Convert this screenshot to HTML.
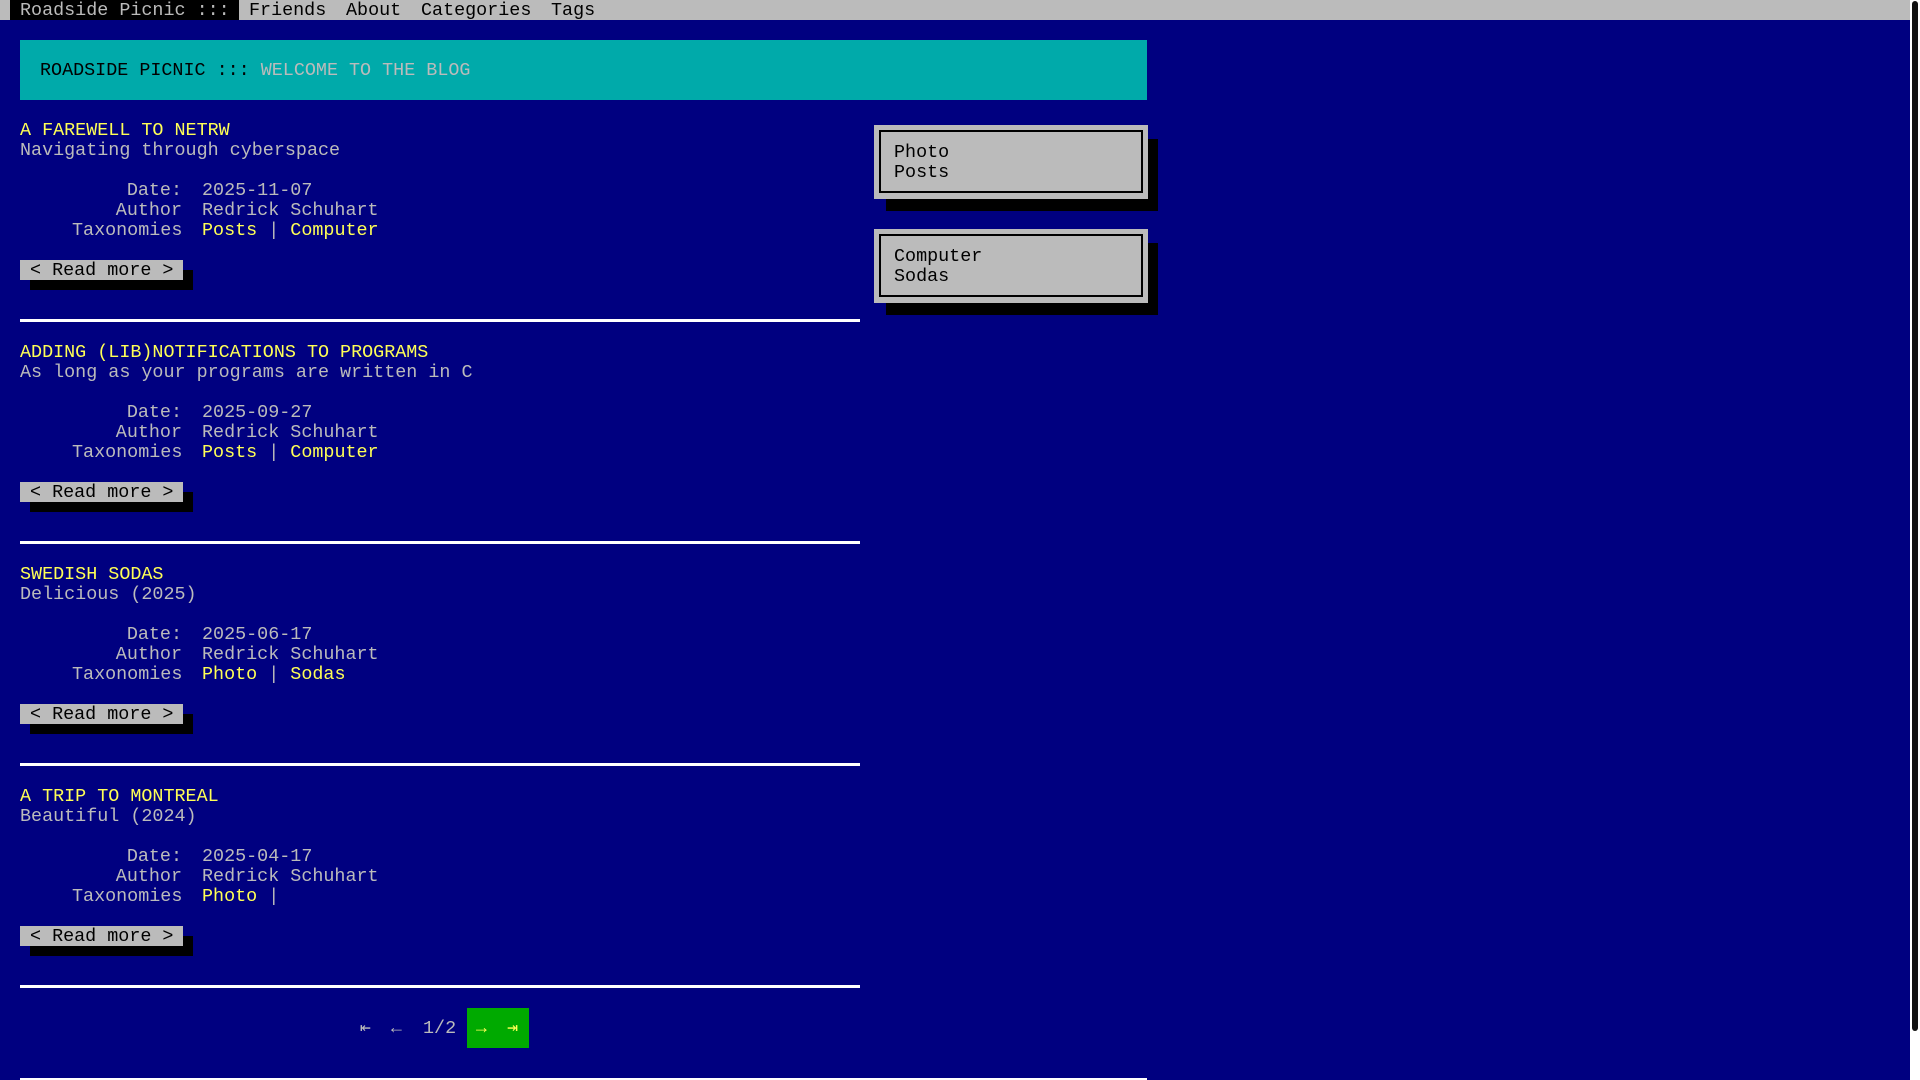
<!DOCTYPE html>
<html><head><meta charset="utf-8"><style>
*{margin:0;padding:0;box-sizing:border-box}
html,body{width:1920px;height:1080px;overflow:hidden;background:#000080;font-family:"Liberation Mono",monospace;font-size:18.4px;color:#bbbbbb}
.a{position:absolute;white-space:pre;line-height:20px}
.nav{position:absolute;left:0;top:0;width:1910px;height:20px;background:#bbbbbb}
.nav span{position:absolute;top:0;line-height:22px;height:20px;color:#000;white-space:pre}
.hero{position:absolute;left:20px;top:40px;width:1127px;height:60px;background:#00aaaa}
.y{color:#ffff55}
.sep{position:absolute;left:20px;width:840px;height:3px;background:#fff}
.btn{position:absolute;left:20px;width:163px;height:20px;background:#bbbbbb;color:#000;line-height:21px;padding-left:10px;white-space:pre}
.sh{position:absolute;left:30px;width:163px;height:20px;background:#000}
.box{position:absolute;left:874px;width:274px;height:74px;background:#bbbbbb}
.box i{position:absolute;left:5px;top:5px;right:5px;bottom:6px;border:2px solid #000}
.box div{position:absolute;left:20px;top:18px;color:#000;line-height:20px;white-space:pre}
.bsh{position:absolute;left:886px;width:272px;height:72px;background:#000}
</style></head><body>
<div class="nav">
<span style="left:10px;width:229px;background:#000;color:#bbbbbb;padding-left:10px">Roadside Picnic :::</span>
<span style="left:249px">Friends</span>
<span style="left:346px">About</span>
<span style="left:421px">Categories</span>
<span style="left:551px">Tags</span>
</div>
<div class="hero"><div class="a" style="left:20px;top:21px;color:#000">ROADSIDE PICNIC ::: <span style="color:#bbbbbb">WELCOME TO THE BLOG</span></div></div>

<div class="bsh" style="top:139px"></div>
<div class="box" style="top:125px"><i></i><div>Photo
Posts</div></div>
<div class="bsh" style="top:243px"></div>
<div class="box" style="top:229px"><i></i><div>Computer
Sodas</div></div>

<!-- post 1 -->
<div class="a y" style="left:20px;top:121px">A FAREWELL TO NETRW</div>
<div class="a" style="left:20px;top:141px">Navigating through cyberspace</div>
<div class="a" style="left:72px;top:181px;width:110px;text-align:right">Date:
Author
Taxonomies</div>
<div class="a" style="left:202px;top:181px">2025-11-07
Redrick Schuhart
<span class="y">Posts</span> | <span class="y">Computer</span></div>
<div class="sh" style="top:270px"></div><div class="btn" style="top:260px">&lt; Read more &gt;</div>
<div class="sep" style="top:319px"></div>

<!-- post 2 -->
<div class="a y" style="left:20px;top:343px">ADDING (LIB)NOTIFICATIONS TO PROGRAMS</div>
<div class="a" style="left:20px;top:363px">As long as your programs are written in C</div>
<div class="a" style="left:72px;top:403px;width:110px;text-align:right">Date:
Author
Taxonomies</div>
<div class="a" style="left:202px;top:403px">2025-09-27
Redrick Schuhart
<span class="y">Posts</span> | <span class="y">Computer</span></div>
<div class="sh" style="top:492px"></div><div class="btn" style="top:482px">&lt; Read more &gt;</div>
<div class="sep" style="top:541px"></div>

<!-- post 3 -->
<div class="a y" style="left:20px;top:565px">SWEDISH SODAS</div>
<div class="a" style="left:20px;top:585px">Delicious (2025)</div>
<div class="a" style="left:72px;top:625px;width:110px;text-align:right">Date:
Author
Taxonomies</div>
<div class="a" style="left:202px;top:625px">2025-06-17
Redrick Schuhart
<span class="y">Photo</span> | <span class="y">Sodas</span></div>
<div class="sh" style="top:714px"></div><div class="btn" style="top:704px">&lt; Read more &gt;</div>
<div class="sep" style="top:763px"></div>

<!-- post 4 -->
<div class="a y" style="left:20px;top:787px">A TRIP TO MONTREAL</div>
<div class="a" style="left:20px;top:807px">Beautiful (2024)</div>
<div class="a" style="left:72px;top:847px;width:110px;text-align:right">Date:
Author
Taxonomies</div>
<div class="a" style="left:202px;top:847px">2025-04-17
Redrick Schuhart
<span class="y">Photo</span> |</div>
<div class="sh" style="top:936px"></div><div class="btn" style="top:926px">&lt; Read more &gt;</div>
<div class="sep" style="top:985px"></div>

<!-- pagination -->
<div class="a" style="left:360px;top:1019px;font-size:18px">⇤</div>
<div class="a" style="left:391px;top:1019px;font-size:18px">←</div>
<div class="a" style="left:423px;top:1019px">1/2</div>
<div style="position:absolute;left:467px;top:1008px;width:62px;height:40px;background:#00aa00"></div>
<div class="a y" style="left:476px;top:1019px;font-size:18px">→</div>
<div class="a y" style="left:507px;top:1019px;font-size:18px">⇥</div>
<div style="position:absolute;left:20px;top:1078px;width:1127px;height:2px;background:#fff"></div>

<!-- scrollbar -->
<div style="position:absolute;left:1910px;top:0;width:10px;height:1080px;background:#fff"></div>
<div style="position:absolute;left:1912px;top:1px;width:6px;height:1030px;background:#111;border-radius:3px"></div>
</body></html>
